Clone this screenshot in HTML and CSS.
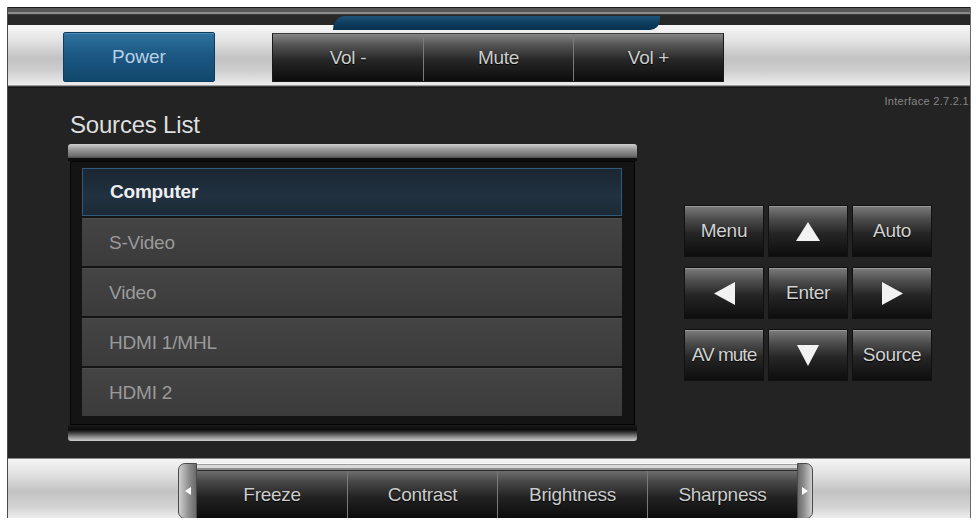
FILE: index.html
```html
<!DOCTYPE html>
<html lang="en">
<head>
<meta charset="utf-8">
<title>Projector Control</title>
<link rel="stylesheet" href="styles.css">
</head>
<body>
<div class="screen">
  <div class="topband"><div class="tab"></div></div>

  <div class="toolbar">
    <div class="btn-power">Power</div>
    <div class="seg-group">
      <div class="seg">Vol -</div>
      <div class="seg">Mute</div>
      <div class="seg">Vol +</div>
    </div>
  </div>
  <div class="toolbar-edge"></div>

  <div class="main">
    <section class="sources">
      <h1 class="sources-title">Sources List</h1>
      <div class="list-cap list-cap-top"></div>
      <ul class="source-list">
        <li class="source active">Computer</li>
        <li class="source">S-Video</li>
        <li class="source">Video</li>
        <li class="source">HDMI 1/MHL</li>
        <li class="source">HDMI 2</li>
      </ul>
      <div class="list-cap list-cap-bottom"></div>
    </section>

    <section class="side">
      <div class="version">Interface 2.7.2.1</div>
      <div class="keypad">
        <div class="key">Menu</div>
        <div class="key"><svg class="arrow" width="24" height="19" viewBox="0 0 24 19"><polygon points="12,0 24,19 0,19"/></svg></div>
        <div class="key">Auto</div>
        <div class="key"><svg class="arrow" width="21" height="23" viewBox="0 0 21 23"><polygon points="0,11.5 21,0 21,23"/></svg></div>
        <div class="key">Enter</div>
        <div class="key"><svg class="arrow" width="21" height="23" viewBox="0 0 21 23"><polygon points="0,0 21,11.5 0,23"/></svg></div>
        <div class="key key-tight">AV mute</div>
        <div class="key"><svg class="arrow" width="22" height="21" viewBox="0 0 22 21"><polygon points="0,0 22,0 11,21"/></svg></div>
        <div class="key">Source</div>
      </div>
    </section>
  </div>

  <div class="bottombar">
    <div class="adjust">
      <div class="cap cap-left"><svg width="6" height="8" viewBox="0 0 6 8"><polygon points="0,4 6,0 6,8"/></svg></div>
      <div class="adjust-body">
        <div class="adjust-rim"></div>
        <div class="adjust-row">
          <div class="seg seg-wide">Freeze</div>
          <div class="seg seg-wide">Contrast</div>
          <div class="seg seg-wide">Brightness</div>
          <div class="seg seg-wide">Sharpness</div>
        </div>
      </div>
      <div class="cap cap-right"><svg width="6" height="8" viewBox="0 0 6 8"><polygon points="0,0 6,4 0,8"/></svg></div>
    </div>
  </div>
</div>
</body>
</html>
```

FILE: styles.css
```css
* { box-sizing: border-box; }

html, body {
  margin: 0;
  padding: 0;
  background: #ffffff;
}

body {
  font-family: "Liberation Sans", Arial, sans-serif;
}

.screen {
  margin: 7px 0 0 7px;
  width: 964px;
  height: 511px;
  overflow: hidden;
  background: #232323;
  border-left: 1px solid #4a4a4a;
  border-right: 1px solid #6a6a6a;
  display: flex;
  flex-direction: column;
}

/* top dark band with the blue indicator tab */
.topband {
  height: 18px;
  flex: none;
  display: flex;
  background: linear-gradient(#1c1c1c 0 1px, #565656 1px 5px, #8a8a8a 5px 7px, #3a3a3a 7px 8px, #272727 8px);
}

.tab {
  position: relative;
  z-index: 1;
  margin: 9px 0 -5px 325px;
  width: 327px;
  height: 14px;
  background: linear-gradient(#1d5478, #0c3a5a 60%, #0a3150);
  border-radius: 12px 0 10px 0 / 14px 0 10px 0;
}

/* silver toolbar with the power and volume buttons */
.toolbar {
  height: 60px;
  flex: none;
  display: flex;
  align-items: flex-start;
  padding: 7px 0 0 55px;
  background: linear-gradient(#f6f6f6 0%, #e4e4e4 25%, #c2c2c2 55%, #cdcdcd 75%, #ececec 100%);
}

.btn-power {
  width: 152px;
  height: 50px;
  display: flex;
  align-items: center;
  justify-content: center;
  font-size: 19px;
  color: #b9d0e2;
  background: linear-gradient(#2f729e, #1c5884 45%, #11476c);
  border: 1px solid #0d3d5e;
  border-radius: 2px;
  box-shadow: inset 0 1px 0 #4d8bb4;
}

.seg-group {
  margin: 1px 0 0 57px;
  display: flex;
  height: 49px;
  border: 1px solid #1a1a1a;
  border-top-color: #3a3a3a;
}

.seg {
  width: 150px;
  display: flex;
  align-items: center;
  justify-content: center;
  font-size: 19px;
  color: #cdcdcd;
  letter-spacing: -0.3px;
  text-shadow: 0 1px 1px #000;
  background: linear-gradient(#858585 0%, #565656 22%, #272727 55%, #0c0c0c 100%);
  border-left: 1px solid #7a7a7a;
}

.seg:first-child { border-left: none; }

.toolbar-edge {
  height: 3px;
  flex: none;
  background: linear-gradient(#9a9a9a 0 1px, #3c3c3c 1px 2px, #161616 2px);
}

/* main dark area */
.main {
  height: 370px;
  flex: none;
  display: flex;
}

.sources {
  width: 629px;
  flex: none;
  padding: 23px 0 0 60px;
}

.sources-title {
  margin: 0 0 5px 2px;
  font-size: 24px;
  line-height: 28px;
  font-weight: normal;
  color: #dedede;
  letter-spacing: -0.2px;
}

.list-cap {
  width: 569px;
}

.list-cap-top {
  height: 17px;
  border-radius: 3px 3px 0 0;
  background: linear-gradient(#cfcfcf 0%, #9b9b9b 30%, #6e6e6e 70%, #4a4a4a 82%, #0e0e0e 82%);
}

.list-cap-bottom {
  height: 16px;
  border-radius: 0 0 3px 3px;
  background: linear-gradient(#1a1a1a 0%, #0b0b0b 30%, #505050 55%, #9c9c9c 80%, #d0d0d0 100%);
}

.source-list {
  list-style: none;
  margin: 0 2px;
  padding: 6px 12px 8px 11px;
  background: #141414;
  border: 1px solid #050505;
  display: flex;
  flex-direction: column;
  gap: 2px;
}

.source {
  height: 48px;
  display: flex;
  align-items: center;
  padding-left: 27px;
  font-size: 19px;
  color: #9a9a9a;
  letter-spacing: -0.2px;
  background: linear-gradient(#444444, #3b3b3b);
  border-top: 1px solid #4c4c4c;
}

.source.active {
  font-weight: bold;
  font-size: 19px;
  color: #efefef;
  letter-spacing: -0.2px;
  background: linear-gradient(#1b2733, #213140 60%, #1c2a36);
  border: 1px solid #2f5a7c;
}

.side {
  flex: 1;
  display: flex;
  flex-direction: column;
}

.version {
  padding: 7px 1px 0 0;
  height: 20px;
  text-align: right;
  white-space: nowrap;
  font-size: 11px;
  line-height: 13px;
  letter-spacing: 0.3px;
  color: #858585;
}

.keypad {
  margin: 97px 0 0 47px;
  display: grid;
  grid-template-columns: repeat(3, 80px);
  grid-auto-rows: 52px;
  column-gap: 4px;
  row-gap: 10px;
}

.key {
  display: flex;
  align-items: center;
  justify-content: center;
  font-size: 19px;
  color: #d2d2d2;
  letter-spacing: -0.3px;
  text-shadow: 0 1px 1px #000;
  background: linear-gradient(#7c7c7c 0%, #4e4e4e 25%, #252525 55%, #0d0d0d 100%);
  border: 1px solid #111;
  box-shadow: inset 0 1px 0 #9a9a9a;
}

.key-tight { letter-spacing: -1px; }

.arrow { fill: #f2f2f2; }

/* silver bottom bar with the picture adjustment strip */
.bottombar {
  height: 60px;
  flex: none;
  padding: 4px 0 0 170px;
  border-top: 1px solid #8a8a8a;
  background: linear-gradient(#f4f4f4 0%, #e2e2e2 25%, #c3c3c3 55%, #d2d2d2 80%, #ededed 100%);
}

.adjust {
  display: flex;
  height: 56px;
}

.cap {
  width: 19px;
  display: flex;
  align-items: center;
  justify-content: center;
  fill: #ffffff;
  background: linear-gradient(90deg, #cfcfcf, #8c8c8c 60%, #6a6a6a);
  border: 1px solid #4a4a4a;
}

.cap-left { border-radius: 7px 0 0 7px; }
.cap-right {
  width: 16px;
  border-radius: 0 7px 7px 0;
  background: linear-gradient(90deg, #6a6a6a, #8c8c8c 40%, #cfcfcf);
}

.adjust-body {
  display: flex;
  flex-direction: column;
}

.adjust-rim {
  height: 8px;
  background: linear-gradient(#fafafa 0 1px, #9e9e9e 1px 2px, #d8d8d8 2px 5px, #8e8e8e 5px 7px, #2a2a2a 7px);
}

.adjust-row {
  flex: 1;
  display: flex;
}

.seg-wide {
  width: 150px;
  background: linear-gradient(#6e6e6e 0%, #484848 22%, #222 55%, #0b0b0b 100%);
}
```
